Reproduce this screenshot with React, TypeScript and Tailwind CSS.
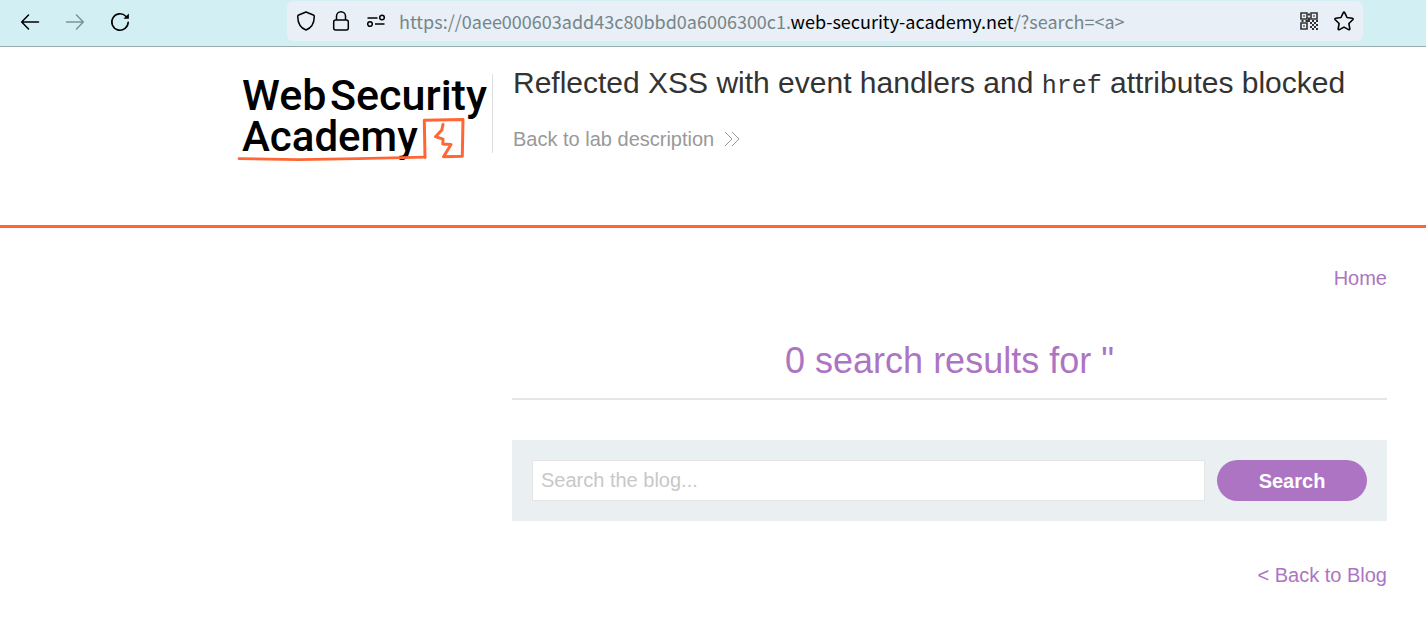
import type { ReactNode } from "react";

function ToolbarButton({ label, children }: { label: string; children: ReactNode }) {
  return (
    <button type="button" aria-label={label} className="flex size-5 items-center justify-center">
      {children}
    </button>
  );
}

function Arrow({ className }: { className: string }) {
  return (
    <svg viewBox="0 0 20 20" className={className} fill="none" stroke="currentColor" strokeWidth="1.5" strokeLinecap="round" strokeLinejoin="round">
      <path d="M18.5 10H2M8.5 3 1.7 10l6.8 7" />
    </svg>
  );
}

function BrowserBar() {
  return (
    <div className="flex h-[47px] items-start border-b border-[#9aabae] bg-[#d2eff3] pr-[63px] text-black">
      <div className="flex w-[287px] shrink-0 gap-[25px] pt-3 pl-5">
        <ToolbarButton label="Back">
          <Arrow className="size-5" />
        </ToolbarButton>
        <ToolbarButton label="Forward">
          <Arrow className="size-5 rotate-180 text-[#7f9396]" />
        </ToolbarButton>
        <ToolbarButton label="Reload">
          <svg viewBox="0 0 20 20" className="size-5" fill="none" stroke="currentColor" strokeWidth="1.6" strokeLinecap="round">
            <path d="M18.2 10.3A8.2 8.2 0 1 1 15.8 4.2" />
            <path d="M18.9 1.4v5.4h-5.4z" fill="currentColor" stroke="none" />
          </svg>
        </ToolbarButton>
      </div>
      <div className="mt-px flex h-10 min-w-0 grow items-center rounded-md bg-[#e8eff6] px-[9px]">
        <div className="flex shrink-0 gap-[15px]">
          <ToolbarButton label="Tracking protection">
            <svg viewBox="0 0 20 20" className="size-5" fill="none" stroke="currentColor" strokeWidth="1.5" strokeLinejoin="round">
              <path d="M10 1 17.3 4q1 .4 1 1.5C18.2 11 16 16.8 10 19 4 16.8 1.8 11 1.7 5.5q0-1.1 1-1.5Z" />
            </svg>
          </ToolbarButton>
          <ToolbarButton label="Site security">
            <svg viewBox="0 0 20 20" className="size-5" fill="none" stroke="currentColor" strokeWidth="1.5">
              <rect x="2.7" y="9" width="14.6" height="10" rx="2" />
              <path d="M5.5 9V5.3a4.5 4.5 0 0 1 9 0V9" />
            </svg>
          </ToolbarButton>
          <ToolbarButton label="Permissions">
            <svg viewBox="0 0 20 20" className="size-5" fill="none" stroke="currentColor" strokeWidth="1.5">
              <path d="M1.5 7h10M9 13h9.5" />
              <circle cx="16" cy="6.5" r="2.3" />
              <circle cx="4" cy="13" r="2.3" />
            </svg>
          </ToolbarButton>
        </div>
        <div className="ml-[13px] min-w-0 grow truncate font-['Noto_Sans_CJK_SC',sans-serif] text-[18px] leading-7 text-[#76858a]">
          https://0aee000603add43c80bbd0a6006300c1.<span className="text-black">web-security-academy.net</span>/?search=&lt;a&gt;
        </div>
        <div className="flex shrink-0 gap-[15px]">
          <ToolbarButton label="QR code">
            <svg viewBox="0 0 20 20" className="size-5" fill="none" stroke="#333" strokeWidth="1.6">
              <path d="M2 2h6v6H2zM12 2h6v6h-6zM2 12h6v6H2z" />
              <path d="M4.3 4.3h1.4v1.4H4.3zM14.3 4.3h1.4v1.4h-1.4zM4.3 14.3h1.4v1.4H4.3zM9 2.500h2v2H9zM9 6.500h2V9H9zM2.500 9h2v2h-2zM6.500 9H9v2H6.500zM9 9h2v2H9zM13 9h2v2h-2zM17 9h2v2h-2zM11 11h2v2h-2zM15 11h2v2h-2zM13 13h2v2h-2zM17 13h2v2h-2zM11 15h2v2h-2zM15 15h2v2h-2zM13 17h2v2h-2zM17 17h2v2h-2z" fill="#333" stroke="none" />
            </svg>
          </ToolbarButton>
          <ToolbarButton label="Bookmark">
            <svg viewBox="0 0 20 20" className="size-5" fill="none" stroke="currentColor" strokeWidth="1.6" strokeLinejoin="round">
              <path d="M9.3 1.6q.7-1.2 1.4 0l2.3 4.9 5.3.8q1.4.3.4 1.4l-3.8 3.8.9 5.3q.1 1.4-1.2.8L10 16.1l-4.600 2.500q-1.3.6-1.2-.8l.9-5.3-3.8-3.8q-1-1.1.4-1.4L7 6.500Z" />
            </svg>
          </ToolbarButton>
        </div>
      </div>
    </div>
  );
}

function Logo() {
  return (
    <svg viewBox="0 0 250 90" className="h-[90px] w-[250px] overflow-visible" role="img" aria-label="Web Security Academy">
      <g fontFamily="Roboto, sans-serif" fontWeight="500" fill="#000">
        <text x="4" y="36" fontSize="43">Web</text>
        <text x="92" y="36" fontSize="43">Security</text>
        <text x="4" y="77" fontSize="42">Academy</text>
      </g>
      <g fill="none" stroke="#ff6633" strokeLinejoin="round" strokeLinecap="round">
        <path d="M1 84.6 60 85.6 120 84.6 187 83.2" strokeWidth="2.8" />
        <path d="M187 83.2 186.3 46.2 225 45.4 224.3 82.2 205.5 82.7 213 70.5 204.8 70 205 65.2 197.5 62.7 203.8 56 205 50.5" strokeWidth="3" />
      </g>
    </svg>
  );
}

function LabHeader() {
  return (
    <header className="flex h-[181px] items-start border-b-[3px] border-[#ff6633] pr-[39px] pl-[238px]">
      <div className="mt-[27px] w-[255px] shrink-0">
        <div className="h-[79px] border-r border-[#dedede]">
          <Logo />
        </div>
      </div>
      <div className="min-w-0 pt-[18px] pl-5">
        <h1 className="text-[30px] leading-9 text-[#333332]">
          Reflected XSS with event handlers and{" "}
          <code className="font-['Liberation_Mono',monospace] text-[25px] leading-9">href</code> attributes blocked
        </h1>
        <a href="#lab" className="mt-[22px] inline-flex items-center gap-[10px] text-[20px] leading-6 text-[#999]">
          Back to lab description
          <svg viewBox="0 0 16 16" className="size-4" fill="none" stroke="currentColor" strokeWidth="1">
            <path d="m1 1 7 7-7 7M8 1l7 7-7 7" />
          </svg>
        </a>
      </div>
    </header>
  );
}

export default function App() {
  return (
    <div className="min-h-screen bg-white font-['Liberation_Sans',Arial,sans-serif]">
      <BrowserBar />
      <LabHeader />
      <main className="flex flex-col pt-[38px] pr-[39px] pb-12 pl-[512px] text-[20px] leading-6 text-[#ad74c3]">
        <nav className="flex justify-end">
          <a href="#home">Home</a>
        </nav>
        <h2 className="mt-[49px] border-b-2 border-[#e5e5e5] pb-[15px] text-center text-[36px] leading-[44px]">
          0 search results for &quot;
        </h2>
        <form className="mt-10 flex gap-3 bg-[#eaeff2] p-5" onSubmit={(e) => e.preventDefault()}>
          <input
            type="text"
            aria-label="Search the blog"
            placeholder="Search the blog..."
            className="h-[41px] min-w-0 grow border border-[#e4e4e4] bg-white px-2 text-[#333332] outline-none placeholder:text-[#c8c8c8]"
          />
          <button type="submit" className="h-[41px] w-[150px] shrink-0 rounded-full bg-[#ad74c3] font-bold text-white">
            Search
          </button>
        </form>
        <a href="#blog" className="mt-[42px] self-end">
          &lt; Back to Blog
        </a>
      </main>
    </div>
  );
}
